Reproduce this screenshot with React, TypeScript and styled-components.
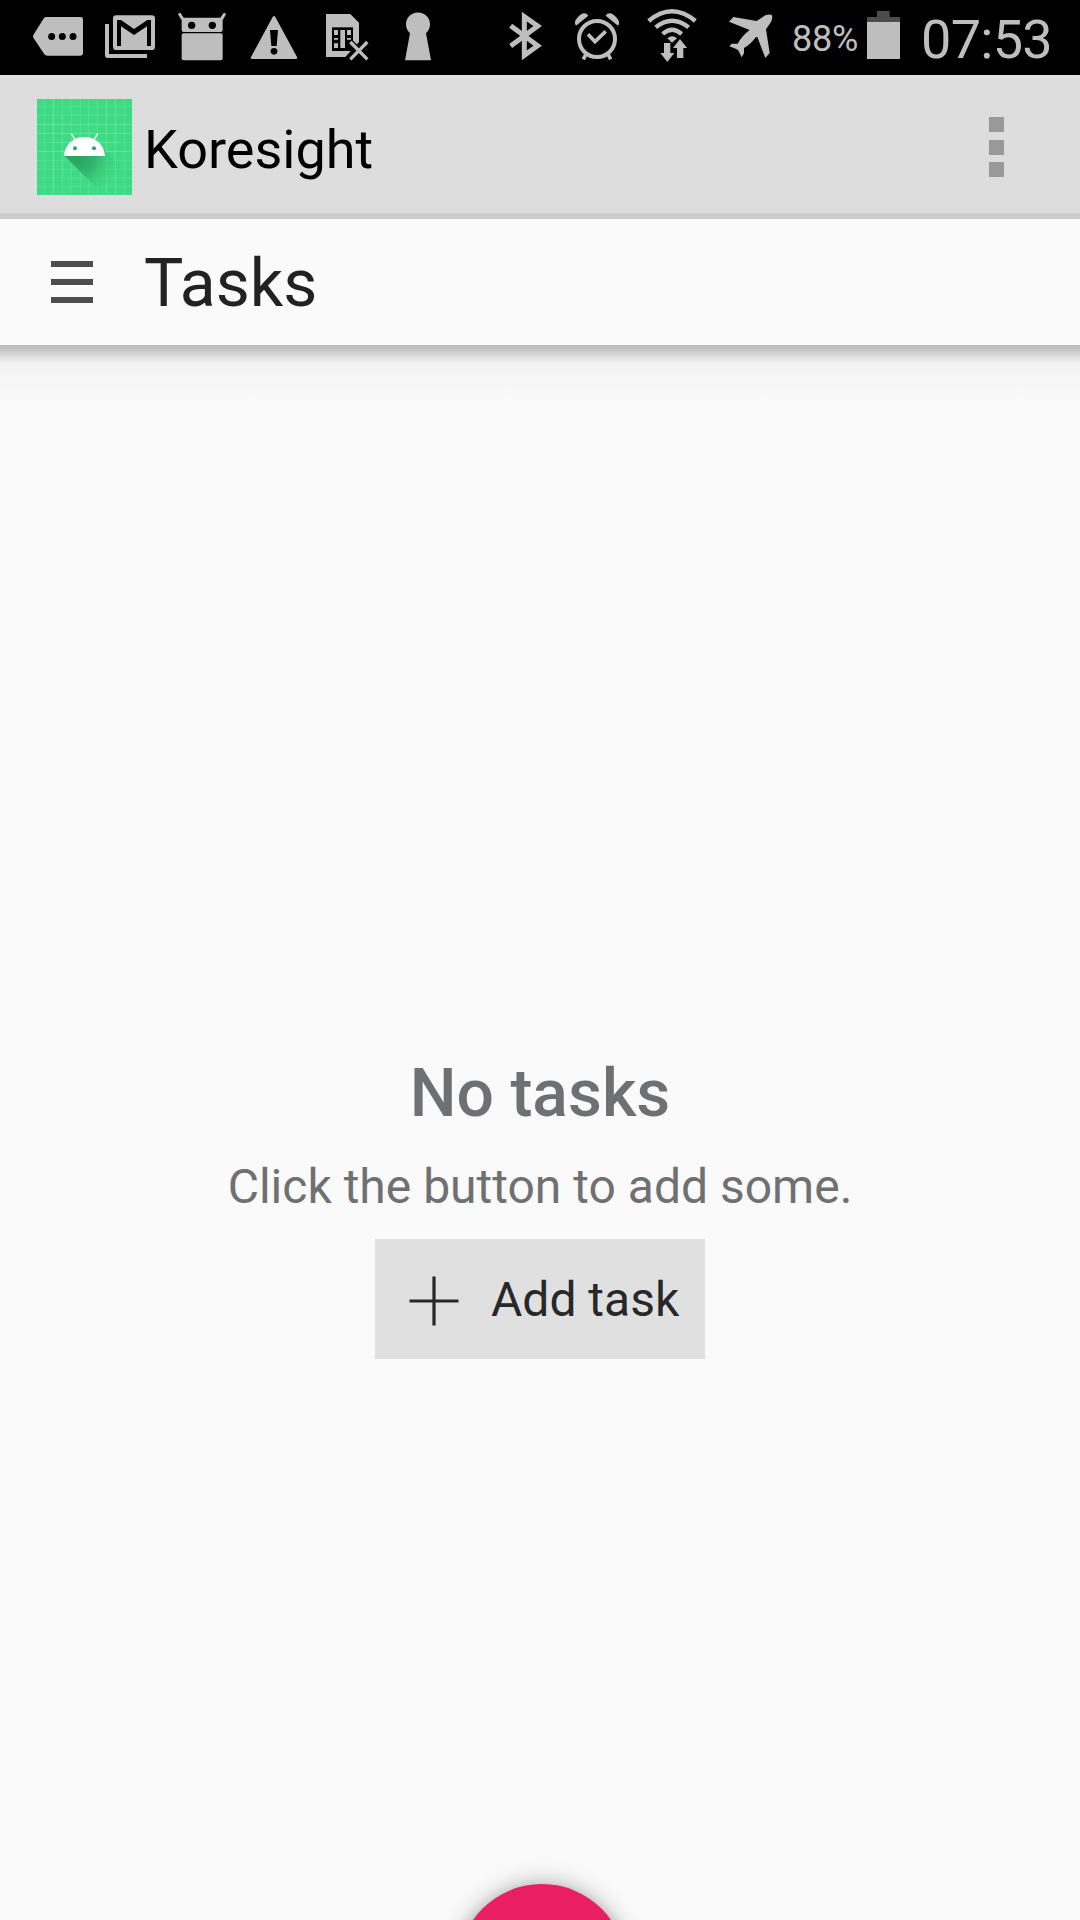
import React from "react";
import styled, { createGlobalStyle } from "styled-components";

const GlobalStyle = createGlobalStyle`
  html, body { margin: 0; padding: 0; background: #fafafa; }
  * { box-sizing: border-box; }
`;

const Screen = styled.div`
  display: flex;
  flex-direction: column;
  width: 1080px;
  height: 1920px;
  overflow: hidden;
  background: #fafafa;
  font-family: Roboto, "Liberation Sans", sans-serif;
`;

const StatusBar = styled.header`
  display: flex;
  flex: none;
  height: 75px;
  padding-left: 32px;
  background: #000;
  color: #bebebe;
`;

const StatusSvg = styled.svg<{ $gap: number }>`
  flex: none;
  display: block;
  height: 75px;
  margin-left: ${(p) => p.$gap}px;
`;

const StatusText = styled.span<{ $size: number; $gap: number; $line: number; $spacing?: number; $width: number }>`
  flex: none;
  width: ${(p) => p.$width}px;
  margin-left: ${(p) => p.$gap}px;
  font-size: ${(p) => p.$size}px;
  letter-spacing: ${(p) => p.$spacing ?? 0}px;
  line-height: ${(p) => p.$line}px;
  white-space: nowrap;
`;

const AppBar = styled.div`
  display: flex;
  flex: none;
  align-items: center;
  justify-content: space-between;
  height: 144px;
  padding: 0 76px 0 37px;
  background: #ddd;
  border-top: 3px solid #e0e0e0;
  border-bottom: 6px solid #ccc;
`;

const Brand = styled.div`
  display: flex;
  align-items: center;
  gap: 12px;
`;

const AppLogo = styled.svg`
  display: block;
  width: 95px;
  height: 96px;
  margin-top: 3px;
`;

const AppName = styled.h1`
  margin: 8px 0 0;
  font-size: 54px;
  font-weight: 400;
  line-height: 64px;
  color: #000;
`;

const Overflow = styled.button`
  display: flex;
  flex-direction: column;
  gap: 7.5px;
  padding: 0;
  margin: 3px 0 0;
  border: 0;
  background: none;
`;

const Dot = styled.span`
  width: 15px;
  height: 15px;
  background: #999;
`;

const Toolbar = styled.div`
  display: flex;
  flex: none;
  align-items: center;
  height: 126px;
  padding-left: 51px;
  background: #fafafa;
`;

const MenuButton = styled.button`
  display: flex;
  flex-direction: column;
  gap: 12px;
  width: 42px;
  padding: 0;
  border: 0;
  background: none;
`;

const MenuLine = styled.span`
  height: 6px;
  background: #4d4d4d;
`;

const Title = styled.h2`
  margin: 4px 0 0 51px;
  font-size: 66px;
  font-weight: 400;
  line-height: 78px;
  color: #222;
`;

const Shade = styled.div`
  flex: none;
  height: 55px;
  background: linear-gradient(#bababa 0, #c4c4c4 4px, #d4d4d4 9px, #e6e6e6 14px, #f2f2f2 19px, #f6f6f6 36px, #fafafa 55px);
`;

const Empty = styled.main`
  display: flex;
  flex: 1;
  flex-direction: column;
  align-items: center;
  padding-top: 655px;
`;

const EmptyTitle = styled.h3`
  margin: 0;
  font-size: 66px;
  font-weight: 500;
  line-height: 78px;
  color: #6f7072;
`;

const EmptyText = styled.p`
  margin: 25px 0 0;
  font-size: 48px;
  line-height: 58px;
  color: #6f7072;
`;

const AddButton = styled.button`
  display: flex;
  align-items: center;
  width: 330px;
  height: 120px;
  margin-top: 23px;
  padding: 0 0 0 34px;
  border: 0;
  background: #e0e0e0;
  color: #262829;
  font: 400 48px/58px Roboto, "Liberation Sans", sans-serif;
`;

const PlusIcon = styled.svg`
  display: block;
  width: 50px;
  height: 50px;
  margin: 3px 32px 0 0;
`;

const ButtonLabel = styled.span`
  margin-top: 2px;
`;

const Fab = styled.button`
  flex: none;
  width: 168px;
  height: 168px;
  margin: 0 0 -132px 457.5px;
  padding: 0;
  border: 0;
  border-radius: 50%;
  background: #e91e63;
  box-shadow: 0 9px 15px rgba(0, 0, 0, 0.3), 0 0 24px rgba(0, 0, 0, 0.3);
`;

type IconProps = { gap: number; x: number; w: number; children: React.ReactNode };

/* Status icons are drawn on a grid of three units per pixel. */
const StatusIcon = ({ gap, x, w, children }: IconProps) => (
  <StatusSvg $gap={gap} width={w} viewBox={`${x} 0 ${w * 3} 225`} fill="#bebebe">
    {children}
  </StatusSvg>
);

const gridX = [73, 100, 127, 154, 181, 206, 232, 259, 286, 313];
const gridY = [109, 136, 163, 190, 217, 244, 271, 298, 324, 349];

const Logo = () => (
  <AppLogo viewBox="51 87 285 288">
    <defs>
      <radialGradient id="cast" cx="165" cy="250" r="150" gradientUnits="userSpaceOnUse">
        <stop offset="0" stopColor="#2a9d60" stopOpacity="1" />
        <stop offset="0.4" stopColor="#2fae69" stopOpacity="0.9" />
        <stop offset="1" stopColor="#3ddc84" stopOpacity="0" />
      </radialGradient>
    </defs>
    <rect x="51" y="87" width="285" height="288" fill="#3ddc84" />
    <g stroke="#fff" strokeWidth="2.4" strokeOpacity="0.16">
      {gridX.map((x) => <path key={x} d={`M${x} 87V375`} />)}
      {gridY.map((y) => <path key={y} d={`M51 ${y}H336`} />)}
    </g>
    <g stroke="#fff" strokeWidth="2.4" strokeOpacity="0.16">
      <path d="M100 87V375M127 138V324M259 87V375M286 87V375M51 163H336M51 190H336M100 217H286M51 244H336" />
    </g>
    <path d="M133 257L250 374H336V321L248 233L255 257Z" fill="url(#cast)" />
    <path d="M132 258C134 224 160 201 193 201S253 224 255 258Z" fill="#fff" />
    <path d="M154 191L167 212M233 191L220 212" stroke="#fff" strokeWidth="4" />
    <circle cx="165" cy="235" r="6" fill="#3a9f68" />
    <circle cx="222" cy="235" r="6" fill="#3a9f68" />
  </AppLogo>
);

export default function App() {
  return (
    <Screen>
      <GlobalStyle />
      <StatusBar>
        <StatusIcon gap={0} x={36} w={52}>
          <path d="M76 51H182Q189 51 189 58V160Q189 167 182 167H82Q76 167 72 161L40 113Q38 109 40 105L70 57Q73 51 78 51Z" />
          <g fill="#000"><circle cx="95" cy="109.500" r="10.500" /><circle cx="127" cy="109.500" r="10.500" /><circle cx="159" cy="109.500" r="10.500" /></g>
        </StatusIcon>
        <StatusIcon gap={20} x={252} w={52}>
          <path d="M255 72H267V162H381V174H263Q255 174 255 166Z" />
          <rect x="279" y="46" width="126" height="104" rx="10" />
          <path d="M291 138V60H303L342 87L382 60H393V138H381V79L342 105L303 79V138Z" fill="#000" />
        </StatusIcon>
        <StatusIcon gap={21} x={471} w={50}>
          <path d="M485 95V61L474 43L478 38L482 40L491 53H601L610 40L614 38L618 43L608 61V90Q608 96 602 96H491Q485 96 485 90Z" />
          <rect x="485" y="100" width="123" height="81" rx="6" />
          <circle cx="515" cy="76" r="11" fill="#000" /><circle cx="577" cy="76" r="11" fill="#000" />
        </StatusIcon>
        <StatusIcon gap={23} x={60} w={48}>
          <path d="M128 51Q132 45 136 51L201 171Q203 177 197 177H67Q60 177 63 171Z" />
          <path d="M120 90H144L140 138H124Z" fill="#000" /><circle cx="132" cy="154" r="10" fill="#000" />
        </StatusIcon>
        <StatusIcon gap={27} x={285} w={44}>
          <path d="M288 42H361L387 68V126L346 171H288Z" />
          <path d="M306 82H369V153H306Z" fill="#000" />
          <path d="M312 90H324V105H312ZM351 90H363V105H351ZM312 114H324V119H312ZM351 114H363V119H351ZM312 130H324V144H312ZM331 90H345V144H331Z" />
          <path d="M357 124L413 180M413 124L357 180" stroke="#000" strokeWidth="20" />
          <path d="M361 126L412 178M412 126L361 178" stroke="#bebebe" strokeWidth="10" />
        </StatusIcon>
        <StatusIcon gap={35} x={522} w={28}>
          <path d="M540 100A36 36 0 1 1 588 100L603 181H525Z" />
        </StatusIcon>
        <StatusIcon gap={76} x={54} w={35}>
          <path d="M62 77L143 137L103 166V50L143 78L62 138" fill="none" stroke="#bebebe" strokeWidth="15" />
        </StatusIcon>
        <StatusIcon gap={31} x={252} w={46}>
          <g fill="none" stroke="#bebebe">
            <circle cx="321" cy="117" r="54" strokeWidth="12" />
            <path d="M294 103L315 125L347 94" strokeWidth="11" />
            <path d="M288 162L280 178M354 162L362 178" strokeWidth="11" />
          </g>
          <path d="M258 77Q252 69 257 60Q268 43 281 40Q290 39 295 47ZM384 77Q390 69 385 60Q374 43 361 40Q352 39 347 47Z" />
        </StatusIcon>
        <StatusIcon gap={27} x={471} w={50}>
          <g fill="none" stroke="#bebebe" strokeWidth="13">
            <path d="M476 63Q546 5 616 63" /><path d="M497 82Q546 42 596 82" /><path d="M518 102Q546 77 575 102" />
          </g>
          <path d="M532 115Q546 102 561 115L546 128Z" />
          <path d="M522 129H541V159H553L532 186L511 159H522ZM561 174V144H549L570 117L591 144H580V174Z" />
        </StatusIcon>
        <StatusIcon gap={31} x={714} w={45}>
          <path d="M717 65L730 51L800 63L826 46Q840 41 846 46Q849 58 841 69L828 88L839 159L826 174L802 111L797 112Q784 132 762 144V160L755 172L746 153Q743 148 737 146L718 139L725 131H743Q756 107 779 90Z" />
        </StatusIcon>
        <StatusText $gap={19} $size={36} $line={79} $width={75} $spacing={-0.2}>88%</StatusText>
        <StatusIcon gap={0} x={261} w={33}>
          <path d="M291 33H329V51H360V66H261V51H291Z" fill="#4c4c4c" />
          <rect x="261" y="66" width="99" height="111" />
        </StatusIcon>
        <StatusText $gap={21} $size={54} $line={79} $width={140} $spacing={-0.7}>07:53</StatusText>
      </StatusBar>
      <AppBar>
        <Brand>
          <Logo />
          <AppName>Koresight</AppName>
        </Brand>
        <Overflow aria-label="More options"><Dot /><Dot /><Dot /></Overflow>
      </AppBar>
      <Toolbar>
        <MenuButton aria-label="Menu"><MenuLine /><MenuLine /><MenuLine /></MenuButton>
        <Title>Tasks</Title>
      </Toolbar>
      <Shade />
      <Empty>
        <EmptyTitle>No tasks</EmptyTitle>
        <EmptyText>Click the button to add some.</EmptyText>
        <AddButton>
          <PlusIcon viewBox="0 0 50 50"><path d="M0.500 25H49.500M25 0.500V49.500" stroke="#262829" strokeWidth="3.200" /></PlusIcon>
          <ButtonLabel>Add task</ButtonLabel>
        </AddButton>
      </Empty>
      <Fab aria-label="Add task" />
    </Screen>
  );
}
